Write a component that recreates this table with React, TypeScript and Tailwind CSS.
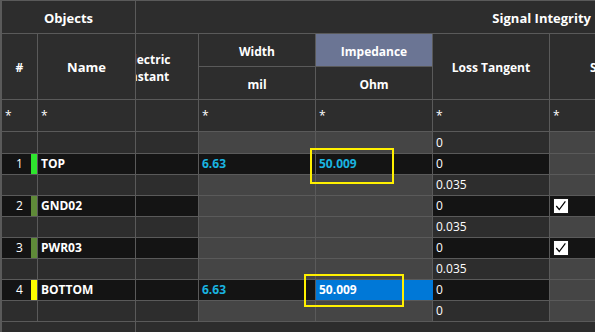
type Row =
  | { kind: "sub"; loss: string }
  | {
      kind: "layer";
      no: number;
      name: string;
      swatch: string;
      width?: string;
      impedance?: string;
      selected?: boolean;
      loss: string;
      check?: boolean;
    };

const rows: Row[] = [
  { kind: "sub", loss: "0" },
  { kind: "layer", no: 1, name: "TOP", swatch: "bg-[#2ee62e]", width: "6.63", impedance: "50.009", loss: "0" },
  { kind: "sub", loss: "0.035" },
  { kind: "layer", no: 2, name: "GND02", swatch: "bg-[#5f8a38]", loss: "0", check: true },
  { kind: "sub", loss: "0.035" },
  { kind: "layer", no: 3, name: "PWR03", swatch: "bg-[#5f8a38]", loss: "0", check: true },
  { kind: "sub", loss: "0.035" },
  { kind: "layer", no: 4, name: "BOTTOM", swatch: "bg-[#ffff00]", width: "6.63", impedance: "50.009", selected: true, loss: "0" },
  { kind: "sub", loss: "0" },
];

const head = "bg-[#2d2d2d] flex items-center justify-center pt-[3px] font-bold text-white";
const filter = "bg-[#2d2d2d] flex items-center pl-[3px] text-white";

const CheckBox = () => (
  <div className="ml-[3px] w-4 h-4 bg-white border border-[#1a1a1a] flex items-center justify-center">
    <svg viewBox="0 0 16 16" className="w-[14px] h-[14px]">
      <path d="M2.6 8 L6 12 L13 2.8" fill="none" stroke="#000" strokeWidth="1.4" />
    </svg>
  </div>
);

const LayerCells = ({ r }: { r: Row }) => {
  if (r.kind === "sub") {
    return (
      <>
        <div className="bg-[#2d2d2d]" />
        <div className="bg-[#2d2d2d]" />
        <div className="bg-[#2d2d2d]" />
        <div className="bg-[#454545]" />
        <div className="bg-[#454545]" />
        <div className="bg-[#2d2d2d] flex items-center pl-[3px]">{r.loss}</div>
        <div className="bg-[#454545]" />
      </>
    );
  }
  return (
    <>
      <div className="bg-[#141414] flex items-stretch">
        <span className="flex-1 flex items-center justify-center pl-[6px]">{r.no}</span>
        <span className={`w-[6px] ${r.swatch}`} />
      </div>
      <div className="bg-[#141414] flex items-center pl-[3px] font-bold">{r.name}</div>
      <div className="bg-[#141414]" />
      <div
        className={`flex items-center pl-[3px] font-bold text-[#1ab4e0] ${r.width ? "bg-[#141414]" : "bg-[#454545]"}`}
      >
        {r.width}
      </div>
      <div
        className={`flex items-center pl-[3px] font-bold ${
          r.selected ? "bg-[#0078d7] text-white" : r.impedance ? "bg-[#141414] text-[#1ab4e0]" : "bg-[#454545]"
        }`}
      >
        {r.impedance}
      </div>
      <div
        className={`bg-[#141414] flex items-center pl-[3px] ${r.selected ? "shadow-[-1px_0_0_#0078d7]" : ""}`}
      >
        {r.loss}
      </div>
      <div className={`flex items-center ${r.check ? "bg-[#141414]" : "bg-[#454545]"}`}>
        {r.check && <CheckBox />}
      </div>
    </>
  );
};

export default function App() {
  return (
    <div className="relative w-[595px] h-[332px] overflow-hidden bg-[#2d2d2d] text-white text-[12px] font-['Open_Sans',sans-serif]">
      <div className="grid grid-cols-[35px_97px_62px_116px_116px_116px_minmax(0,1fr)] grid-rows-[32px_32px_32px_31px_21px_repeat(8,20px)_10px] gap-px bg-[#5a5a5a] pl-[2px] pt-px h-full">
        {/* group headers */}
        <div className={`${head} col-span-2 text-[13px]`}>Objects</div>
        <div className={`${head} col-span-5 justify-end pr-[4px] text-[13px]`}>Signal Integrity</div>

        {/* column headers */}
        <div className={`${head} row-span-2`}>#</div>
        <div className={`${head} row-span-2 text-[13px]`}>Name</div>
        <div className={`${head} row-span-2 overflow-hidden justify-end`}>
          <div className="w-[112px] shrink-0 text-center leading-[17px]">
            Dielectric
            <br />
            Constant
          </div>
        </div>
        <div className={head}>Width</div>
        <div className={`${head} bg-[#6b7594]`}>Impedance</div>
        <div className={`${head} row-span-2`}>Loss Tangent</div>
        <div className={`${head} row-span-2 overflow-hidden justify-start pl-[40px] whitespace-nowrap`}>
          Surface Roughness
        </div>
        <div className={head}>mil</div>
        <div className={head}>Ohm</div>

        {/* filter row */}
        <div className={filter}>*</div>
        <div className={filter}>*</div>
        <div className={filter} />
        <div className={filter}>*</div>
        <div className={filter}>*</div>
        <div className={filter}>*</div>
        <div className={filter}>*</div>

        {rows.map((r, i) => (
          <LayerCells key={i} r={r} />
        ))}

        <div className="bg-[#2d2d2d] col-span-2" />
        <div className="bg-[#2d2d2d] col-span-5" />
      </div>

      {/* highlight frames around impedance values */}
      <div className="absolute left-[310px] top-[148px] w-[84px] h-[36px] border-2 border-[#fff000]" />
      <div className="absolute left-[304px] top-[274px] w-[100px] h-[33px] border-2 border-[#fff000]" />
    </div>
  );
}
